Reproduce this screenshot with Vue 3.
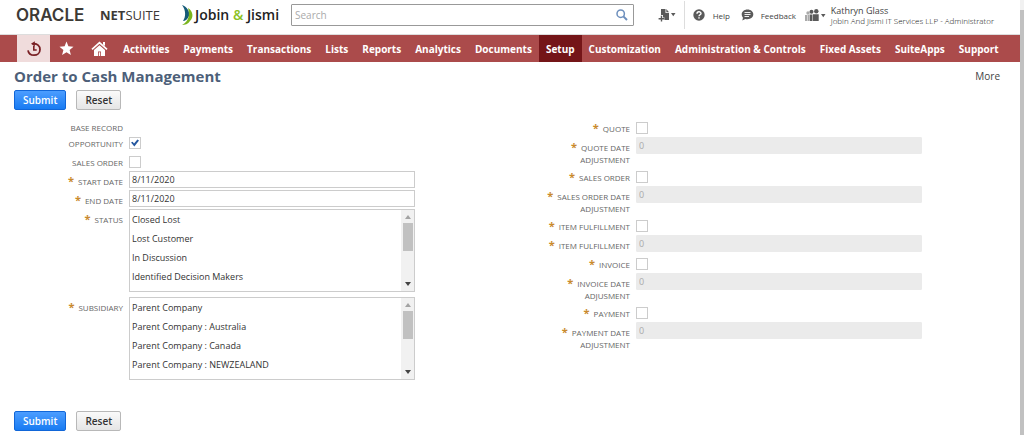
<script setup>
import { ref } from 'vue'

const nav = ['Activities', 'Payments', 'Transactions', 'Lists', 'Reports', 'Analytics', 'Documents', 'Setup', 'Customization', 'Administration & Controls', 'Fixed Assets', 'SuiteApps', 'Support']
const current = 'Setup'

const left = ref([
  { id: 'opportunity', label: 'OPPORTUNITY', type: 'check', value: true },
  { id: 'sales-order', label: 'SALES ORDER', type: 'check', value: false },
  { id: 'start-date', label: 'START DATE', type: 'text', required: true, value: '8/11/2020' },
  { id: 'end-date', label: 'END DATE', type: 'text', required: true, value: '8/11/2020' },
  { id: 'status', label: 'STATUS', type: 'list', required: true, value: [], options: ['Closed Lost', 'Lost Customer', 'In Discussion', 'Identified Decision Makers'] },
  { id: 'subsidiary', label: 'SUBSIDIARY', type: 'list', required: true, value: [], options: ['Parent Company', 'Parent Company : Australia', 'Parent Company : Canada', 'Parent Company : NEWZEALAND'] }
])

const right = ref([
  { id: 'quote', label: 'QUOTE', type: 'check', value: false },
  { id: 'quote-adj', label: 'QUOTE DATE ADJUSTMENT', type: 'number', value: '0' },
  { id: 'order', label: 'SALES ORDER', type: 'check', value: false },
  { id: 'order-adj', label: 'SALES ORDER DATE ADJUSTMENT', type: 'number', value: '0' },
  { id: 'item', label: 'ITEM FULFILLMENT', type: 'check', value: false },
  { id: 'item-adj', label: 'ITEM FULFILLMENT', type: 'number', value: '0' },
  { id: 'invoice', label: 'INVOICE', type: 'check', value: false },
  { id: 'invoice-adj', label: 'INVOICE DATE ADJUSMENT', type: 'number', value: '0' },
  { id: 'payment', label: 'PAYMENT', type: 'check', value: false },
  { id: 'payment-adj', label: 'PAYMENT DATE ADJUSTMENT', type: 'number', value: '0' }
])
</script>

<template>
  <div class="shell">
    <div class="page">
      <header class="top">
        <a class="netsuite" href="#"><span class="oracle">ORACLE</span><span class="ns"><b>NET</b>SUITE</span></a>
        <a class="partner" href="#">
          <svg width="14" height="22" viewBox="0 0 14 22" aria-hidden="true">
            <path d="M1 1C6 3 9 7 8 12C7 15 4 17 2 17C5 13 5 6 1 1Z" fill="#155a78" />
            <path d="M7 4C12 7 13 13 9 17C7 20 4 21 1 21C8 17 9 11 7 4Z" fill="#7ab51d" />
          </svg>
          <span>Jobin <i>&amp;</i> Jismi</span>
        </a>
        <div class="search">
          <input type="search" placeholder="Search" aria-label="Search">
          <button type="button" aria-label="Run search">
            <svg width="12" height="12" viewBox="0 0 12 12" fill="none" stroke="#6d8fbd">
              <circle cx="4.7" cy="4.7" r="3.7" stroke-width="1.5" />
              <path d="M7.4 7.4L11 11" stroke-width="2" />
            </svg>
          </button>
        </div>
        <div class="tools">
          <button type="button" class="create" aria-label="Create new">
            <svg width="19" height="14" viewBox="0 0 19 14" fill="#5a5a5a">
              <path d="M3 1H7.500V5H11V12H6.500V9.500H5V7H3Z" />
              <path d="M8.300 1L11 4.200H8.300Z" />
              <path d="M2.800 7.800H4.200V10H6.400V11.400H4.200V13.600H2.800V11.400H.600V10H2.800Z" />
              <path d="M13 5H17.500L15.250 8.300Z" />
            </svg>
          </button>
          <a class="help" href="#">
            <svg width="12" height="12" viewBox="0 0 12 12" aria-hidden="true">
              <circle cx="6" cy="6" r="5.700" fill="#5a5a5a" />
              <path d="M4 4.700C4 2.200 8 2.200 8 4.500C8 5.800 6 5.800 6 7.300" fill="none" stroke="#fff" stroke-width="1.400" />
              <rect x="5.300" y="8.200" width="1.400" height="1.400" fill="#fff" />
            </svg>
            Help
          </a>
          <a class="feedback" href="#">
            <svg width="13" height="12" viewBox="0 0 13 12" aria-hidden="true">
              <path d="M6.500 .5C10 .5 12.300 2.700 12.300 5.300C12.300 8 10 10.200 6.500 10.200C5.700 10.200 5 10.100 4.300 9.900L1.300 11.500L2 8.700C1.200 7.800 .700 6.600 .700 5.300C.700 2.700 3 .5 6.500 .5Z" fill="#5a5a5a" />
              <path d="M3.500 3.500H9.500M3.500 5.500H9.500M3.500 7.500H8" stroke="#fff" stroke-width=".9" />
            </svg>
            Feedback
          </a>
          <button type="button" class="user">
            <svg width="21" height="14" viewBox="0 0 21 14" aria-hidden="true">
              <g fill="#aaa"><circle cx="3" cy="5" r="1.700" /><path d="M0 7H2V13H0ZM2.500 7H4V13H2.500Z" /></g>
              <g fill="#5a5a5a"><circle cx="6.500" cy="3.800" r="2" /><circle cx="11.300" cy="3.300" r="2.200" /><path d="M4.600 6.500H7.500V13H4.600ZM8 6.200H13.700V13H8Z" /><path d="M16 6H20.500L18.250 9.300Z" /></g>
            </svg>
            <span class="who"><span class="name">Kathryn Glass</span><span class="role">Jobin And Jismi IT Services LLP - Administrator</span></span>
          </button>
        </div>
      </header>

      <nav class="bar">
        <a class="recent" href="#" aria-label="Recent records">
          <svg width="16" height="16" viewBox="0 0 16 16" fill="none" stroke="#7a2024" stroke-width="1.800">
            <path d="M7.500 2.800C11 2.300 14 4.900 14 8.400C14 11.800 11.400 14.200 8 14.200C5 14.200 2.500 12.200 2 9.300" />
            <path d="M7.800 5V9H10.700" stroke-width="1.600" />
            <path d="M8.800 .2L5 2.800L8.800 5.400Z" fill="#7a2024" stroke="none" />
          </svg>
        </a>
        <a class="glyph" href="#" aria-label="Shortcuts">
          <svg width="15" height="15" viewBox="0 0 15 15" fill="#fff"><path d="M7.500 .500L9.400 5.300L14.500 5.700L10.600 9L11.900 14L7.500 11.200L3.100 14L4.400 9L.500 5.700L5.600 5.300Z" /></svg>
        </a>
        <a class="glyph" href="#" aria-label="Home">
          <svg width="17" height="16" viewBox="0 0 17 16">
            <path d="M1 8.300L8.500 1.700L16 8.300" fill="none" stroke="#fff" stroke-width="1.700" />
            <path d="M12 1H14V5L12 3.400Z" fill="#fff" />
            <path d="M8.500 4.300L14 9V15H10V10.500H7V15H3V9Z" fill="#fff" />
            <path d="M7.800 11.300H9.200V15H7.800Z" fill="#fff" />
          </svg>
        </a>
        <a v-for="item in nav" :key="item" class="item" :class="{ current: item === current }" href="#">{{ item }}</a>
      </nav>

      <form @submit.prevent>
        <div class="heading">
          <h1>Order to Cash Management</h1>
          <a href="#">More</a>
        </div>
        <div class="actions">
          <button type="submit" class="primary">Submit</button>
          <button type="reset">Reset</button>
        </div>

        <div class="columns">
          <div class="column">
            <div class="caption">BASE RECORD</div>
            <div v-for="f in left" :key="f.id" class="row" :class="f.type">
              <label :for="f.id"><em v-if="f.required">*</em>{{ f.label }}</label>
              <input v-if="f.type === 'check'" :id="f.id" v-model="f.value" type="checkbox">
              <input v-else-if="f.type === 'text'" :id="f.id" v-model="f.value" class="entry" type="text">
              <div v-else class="listbox">
                <select :id="f.id" v-model="f.value" multiple size="4">
                  <option v-for="o in f.options" :key="o">{{ o }}</option>
                </select>
                <div class="track" aria-hidden="true"><span class="up"></span><span class="thumb"></span><span class="down"></span></div>
              </div>
            </div>
          </div>
          <div class="column">
            <div v-for="f in right" :key="f.id" class="row" :class="f.type">
              <label :for="f.id"><em>*</em>{{ f.label }}</label>
              <input v-if="f.type === 'check'" :id="f.id" v-model="f.value" type="checkbox">
              <input v-else :id="f.id" v-model="f.value" class="entry" type="text" disabled>
            </div>
          </div>
        </div>

        <div class="actions">
          <button type="submit" class="primary">Submit</button>
          <button type="reset">Reset</button>
        </div>
      </form>
    </div>
    <div class="scroll" aria-hidden="true"></div>
  </div>
</template>

<style>
body {
  background: #fff;
}
</style>

<style scoped>
.shell {
  display: flex;
  min-height: 100vh;
  font-family: "Open Sans", "Noto Sans", sans-serif;
  font-size: 8px;
  color: #444;
}
.shell * {
  box-sizing: border-box;
}
.page {
  flex: 1;
  min-width: 0;
}
.scroll {
  width: 4px;
  border-top: 10px solid #f1f1f1;
  background: #c1c1c1;
}
a {
  color: inherit;
  text-decoration: none;
}
button,
input,
select {
  margin: 0;
  font-family: inherit;
  color: inherit;
}
button svg,
a svg {
  display: block;
  flex: none;
}

.top {
  display: flex;
  align-items: center;
  height: 35px;
  padding: 0 26px 4px 16px;
  border-bottom: 1px solid #ddd;
}
.netsuite {
  display: flex;
  align-items: center;
  justify-content: space-between;
  width: 144px;
  color: #3d3a36;
}
.oracle {
  font: 600 17px/20px Inter, sans-serif;
}
.ns {
  font-size: 13px;
  line-height: 20px;
}
.partner {
  display: flex;
  align-items: center;
  width: 110px;
  margin-left: 21px;
  font-size: 14px;
  font-weight: 600;
  line-height: 20px;
  color: #222;
  white-space: nowrap;
}
.partner i {
  font-style: normal;
  color: #8dc21f;
}
.search {
  display: flex;
  flex: 1;
  height: 22px;
  border: 1px solid #999;
  border-radius: 1px;
}
.search input {
  flex: 1;
  min-width: 0;
  padding: 0 3px;
  border: 0;
  outline: 0;
  background: none;
  font-size: 10px;
}
.search input::placeholder {
  color: #aaa;
}
.search button,
.tools button {
  display: flex;
  align-items: center;
  padding: 0;
  border: 0;
  background: none;
}
.search button {
  padding: 0 5px;
}
.tools {
  display: flex;
  align-items: center;
  height: 28px;
}
.create {
  align-self: stretch;
  width: 51px;
}
.tools .create {
  padding-left: 24px;
  border-right: 1px solid #ddd;
}
.help,
.feedback {
  display: flex;
  align-items: center;
}
.help {
  gap: 8px;
  width: 48px;
  margin-left: 8px;
}
.feedback {
  gap: 7px;
  width: 64px;
}
.user {
  gap: 5px;
}
.who {
  display: flex;
  flex-direction: column;
  text-align: left;
  white-space: nowrap;
}
.name {
  font-size: 9px;
  line-height: 11px;
}
.role {
  font-size: 8px;
  font-weight: 300;
  line-height: 10px;
  color: #111;
}

.bar {
  display: flex;
  height: 27px;
  padding-left: 17px;
  background: #ab4b4b;
  color: #fff;
  font-size: 10px;
  font-weight: 700;
  white-space: nowrap;
}
.bar a {
  display: flex;
  flex: none;
  align-items: center;
  justify-content: center;
}
.recent,
.glyph {
  width: 33px;
}
.recent {
  background: #f0dcdc;
}
.item {
  padding: 0 7px;
}
.current {
  background: #741518;
}

.heading {
  display: flex;
  align-items: center;
  justify-content: space-between;
  height: 28px;
  padding: 0 20px 0 14px;
}
h1 {
  margin: 0;
  font-size: 15px;
  line-height: 22px;
  color: #4d5f79;
}
.heading a {
  font-size: 10px;
}
.actions {
  display: flex;
  gap: 10px;
  padding-left: 14px;
}
.actions button {
  height: 20px;
  padding: 0 8px;
  border: 1px solid #b8b8b8;
  border-radius: 2px;
  background: linear-gradient(#fafafa, #e5e5e5);
  color: #333;
  font-size: 10px;
  font-weight: 600;
  line-height: 16px;
}
.actions .primary {
  border-color: #1166d8;
  background: linear-gradient(#4c9dff, #187bf2);
  color: #fff;
}

.columns {
  display: grid;
  grid-template-columns: 1fr 1fr;
  padding: 8px 6px 31px 0;
}
.row {
  display: grid;
  grid-template-columns: 123px 286fr 86fr;
  gap: 6px;
  align-items: start;
  min-height: 19px;
}
label,
.caption {
  color: #666;
  font-size: 8px;
  line-height: 12px;
  text-align: right;
}
label {
  padding: 5px 0 0 34px;
}
.caption {
  width: 123px;
  height: 15px;
  padding-top: 4px;
}
.number {
  padding-bottom: 1px;
}
em {
  margin-right: 4px;
  color: #c98a2e;
  font-size: 11px;
  font-style: normal;
  font-weight: 700;
  line-height: 10px;
}
input[type="checkbox"] {
  display: grid;
  place-items: center;
  width: 12px;
  height: 12px;
  margin-top: 4px;
  appearance: none;
  border: 1px solid #ccc;
  background: #fff;
}
input[type="checkbox"]:checked::before {
  content: "";
  width: 8px;
  height: 8px;
  background: #2457a0;
  clip-path: polygon(0 45%, 20% 35%, 38% 55%, 80% 5%, 100% 20%, 42% 95%);
}
.entry {
  width: 100%;
  height: 17px;
  padding: 0 2px;
  border: 1px solid #ccc;
  background: #fff;
  color: #333;
  font-size: 9px;
}
.entry:disabled {
  border-color: #ebebeb;
  border-radius: 1px;
  background: #ebebeb;
  color: #aaa;
}
.listbox {
  display: flex;
  height: 83px;
  border: 1px solid #ccc;
}
.list + .list {
  margin-top: 5px;
}
select {
  flex: 1;
  min-width: 0;
  height: 100%;
  padding: 3px 0 0;
  border: 0;
  outline: 0;
  overflow: hidden;
  scrollbar-width: none;
  background: #fff;
  color: #333;
  font-size: 9px;
}
option {
  min-height: 19px;
  padding: 0 2px;
  line-height: 19px;
}
.track {
  display: flex;
  flex-direction: column;
  align-items: center;
  width: 13px;
  padding: 5px 0;
  background: #f1f1f1;
}
.up,
.down {
  border: 3px solid transparent;
}
.up {
  border-top: 0;
  border-bottom: 4px solid #a3a3a3;
}
.down {
  margin-top: auto;
  border-bottom: 0;
  border-top: 4px solid #444;
}
.thumb {
  width: 10px;
  height: 28px;
  margin-top: 4px;
  background: #c1c1c1;
}
</style>
